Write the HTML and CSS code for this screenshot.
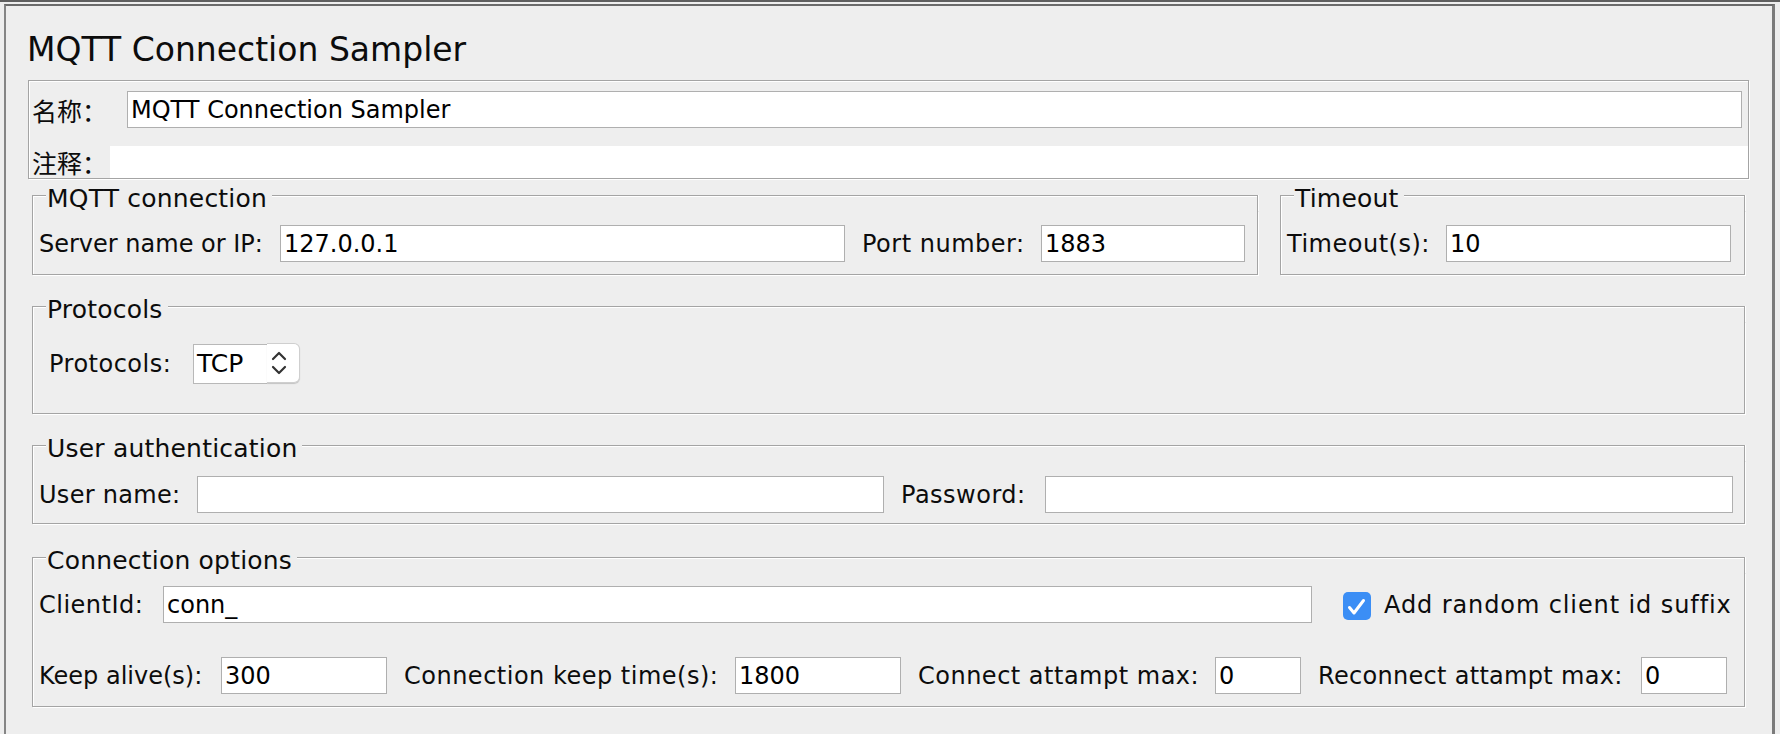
FILE: index.html
```html
<!DOCTYPE html>
<html lang="zh">
<head>
<meta charset="utf-8">
<title>MQTT Connection Sampler</title>
<link rel="stylesheet" href="styles.css">
</head>
<body>
<div class="window">
  <div class="panel">
    <h1 class="title">MQTT Connection Sampler</h1>

    <div class="namebox">
      <div class="name-row">
        <label class="cjk-lbl lbl-name">名称：</label>
        <input class="field name-field" type="text" value="MQTT Connection Sampler">
      </div>
      <div class="comment-row">
        <label class="cjk-lbl lbl-comment">注释：</label>
        <input class="comment-field" type="text" value="">
      </div>
    </div>

    <div class="content">
      <div class="group-row first">
        <section class="group g-mqtt">
          <div class="group-head"><span class="group-title">MQTT connection</span></div>
          <div class="group-body body-mqtt">
            <div class="row">
              <label class="lbl w-server">Server name or IP:</label>
              <input class="field w-server-f" type="text" value="127.0.0.1">
              <label class="lbl gap w-port">Port number:</label>
              <input class="field w-port-f" type="text" value="1883">
            </div>
          </div>
        </section>
        <section class="group g-timeout">
          <div class="group-head"><span class="group-title">Timeout</span></div>
          <div class="group-body body-mqtt">
            <div class="row">
              <label class="lbl w-timeout">Timeout(s):</label>
              <input class="field w-timeout-f" type="text" value="10">
            </div>
          </div>
        </section>
      </div>

      <section class="group g-proto">
        <div class="group-head"><span class="group-title">Protocols</span></div>
        <div class="group-body body-proto">
          <div class="row proto-row">
            <label class="lbl w-proto">Protocols:</label>
            <div class="spinner">
              <span class="spinner-text">TCP</span>
              <span class="spinner-btn">
                <svg width="16" height="26" viewBox="0 0 16 26" aria-hidden="true">
                  <path d="M2 9 L8 3 L14 9" fill="none" stroke="#333" stroke-width="2.2" stroke-linecap="round" stroke-linejoin="round"/>
                  <path d="M2 17 L8 23 L14 17" fill="none" stroke="#333" stroke-width="2.2" stroke-linecap="round" stroke-linejoin="round"/>
                </svg>
              </span>
            </div>
          </div>
        </div>
      </section>

      <section class="group g-user">
        <div class="group-head"><span class="group-title">User authentication</span></div>
        <div class="group-body body-user">
          <div class="row">
            <label class="lbl w-user">User name:</label>
            <input class="field w-user-f" type="text" value="">
            <label class="lbl gap w-pass">Password:</label>
            <input class="field w-pass-f" type="text" value="">
          </div>
        </div>
      </section>

      <section class="group g-conn">
        <div class="group-head"><span class="group-title">Connection options</span></div>
        <div class="group-body body-conn">
          <div class="row">
            <label class="lbl w-client">ClientId:</label>
            <input class="field w-client-f" type="text" value="conn_">
            <span class="check">
              <svg width="28" height="28" viewBox="0 0 28 28" aria-hidden="true">
                <path d="M6.5 15.5 L11 21 L20.5 8.5" fill="none" stroke="#fff" stroke-width="3" stroke-linecap="round" stroke-linejoin="round"/>
              </svg>
            </span>
            <label class="lbl check-lbl">Add random client id suffix</label>
          </div>
          <div class="row row2">
            <label class="lbl w-keep">Keep alive(s):</label>
            <input class="field w-keep-f" type="text" value="300">
            <label class="lbl gap w-ckeep">Connection keep time(s):</label>
            <input class="field w-ckeep-f" type="text" value="1800">
            <label class="lbl gap w-catt">Connect attampt max:</label>
            <input class="field w-small-f" type="text" value="0">
            <label class="lbl gap w-ratt">Reconnect attampt max:</label>
            <input class="field w-small-f" type="text" value="0">
          </div>
        </div>
      </section>
    </div>
  </div>
</div>
</body>
</html>
```

FILE: styles.css
```css
:root {
  --line: #a4a4a4;
  --field-border: #afafaf;
}

* { box-sizing: border-box; }

html, body {
  margin: 0;
  padding: 0;
}

body {
  width: 1780px;
  height: 734px;
  overflow: hidden;
  background: #eeeeee;
  color: #0c0c0c;
  font-family: "DejaVu Sans", "Noto Sans CJK SC", sans-serif;
  font-size: 24px;
}

.window {
  height: 734px;
  border-top: 2px solid #5f5f5f;
  padding-top: 2px;
}

.panel {
  margin-left: 4px;
  width: 1771px;
  height: 730px;
  border-top: 2px solid #6b6b6b;
  border-left: 2px solid #858585;
  border-right: 3px solid #7b7b7b;
  background: #eeeeee;
}

.title {
  margin: 0;
  padding: 24px 0 0 21px;
  font-weight: normal;
  font-size: 33px;
  line-height: 40px;
  color: #0c0c0c;
}

/* name / comment */
.namebox {
  margin: 10px 0 0 22px;
  width: 1721px;
  height: 99px;
  border: 1px solid var(--line);
  box-shadow: inset 1px 1px 0 #fff, 1px 1px 0 #fff;
  padding-top: 10px;
}

.name-row,
.comment-row {
  display: flex;
  align-items: center;
}

.comment-row {
  margin-top: 18px;
  height: 32px;
}

.cjk-lbl {
  flex: none;
  white-space: nowrap;
  padding-left: 3px;
  font-family: "Noto Sans CJK SC", sans-serif;
  font-size: 25px;
  line-height: 30px;
}

.lbl-name { width: 98px; }
.lbl-comment { width: 81px; }

.lbl {
  flex: none;
  white-space: nowrap;
  line-height: 28px;
  letter-spacing: 0.5px;
}

.field {
  flex: none;
  height: 37px;
  margin: 0;
  padding: 0 3px;
  border: 1px solid var(--field-border);
  background: #fff;
  font: inherit;
  font-size: 24px;
  color: #000;
  outline: none;
}

.name-field { width: 1615px; }

.comment-field {
  flex: 1;
  height: 32px;
  margin: 0;
  border: 0;
  background: #fff;
  font: inherit;
  outline: none;
}

/* groups */
.content {
  padding: 0 27px 0 26px;
}

.group-row {
  display: flex;
  gap: 22px;
}

.first { margin-top: 8px; }

.group {
  display: flex;
  flex-direction: column;
}

.g-mqtt { width: 1226px; }
.g-timeout { flex: 1; }
.g-proto { margin-top: 23px; }
.g-user { margin-top: 23px; }
.g-conn { margin-top: 25px; }

.group-head {
  display: flex;
  height: 24px;
}

.group-head::before {
  content: "";
  flex: none;
  width: 13px;
  margin-top: 8px;
  border-top: 1px solid var(--line);
  border-left: 1px solid var(--line);
  box-shadow: inset 1px 1px 0 #fff;
}

.group-head::after {
  content: "";
  flex: 1;
  margin-top: 8px;
  border-top: 1px solid var(--line);
  border-right: 1px solid var(--line);
  box-shadow: inset 0 1px 0 #fff, 1px 0 0 #fff;
}

.group-title {
  flex: none;
  padding: 0 5px 0 1px;
  white-space: nowrap;
  font-size: 25px;
  line-height: 24px;
  letter-spacing: 0.2px;
  color: #0c0c0c;
}

.group-body {
  border: 1px solid var(--line);
  border-top: 0;
  box-shadow: inset 1px 0 0 #fff, 1px 1px 0 #fff;
  padding-left: 6px;
}

.body-mqtt { padding-top: 14px; padding-bottom: 12px; }
.body-proto { padding-top: 22px; padding-bottom: 29px; }
.body-user { padding-top: 15px; padding-bottom: 10px; }
.body-conn { padding-top: 13px; padding-bottom: 12px; }

.row {
  display: flex;
  align-items: center;
}

.row2 { margin-top: 34px; }

.gap { padding-left: 17px; }

.w-server { width: 241px; letter-spacing: 0; }
.w-server-f { width: 565px; }
.w-port { width: 196px; }
.w-port-f { width: 204px; }

.w-timeout { width: 159px; }
.w-timeout-f { width: 285px; }

.proto-row { padding-left: 10px; }
.w-proto { width: 144px; }

.spinner {
  display: flex;
  height: 40px;
  width: 107px;
}

.spinner-text {
  width: 74px;
  height: 40px;
  padding-left: 3px;
  background: #fff;
  border: 1px solid #b8b8b8;
  border-right: 0;
  line-height: 38px;
  font-size: 25px;
  color: #000;
}

.spinner-btn {
  flex: 1;
  height: 40px;
  margin-top: -1px;
  display: flex;
  align-items: center;
  justify-content: center;
  padding-right: 8px;
  background: #fff;
  border: 1px solid #cfcfcf;
  border-left: 0;
  border-radius: 0 6px 6px 0;
  box-shadow: 0 1px 1px rgba(0, 0, 0, 0.18);
}

.w-user { width: 158px; letter-spacing: 0.3px; }
.w-user-f { width: 687px; }
.w-pass { width: 161px; }
.w-pass-f { width: 688px; }

.w-client { width: 124px; }
.w-client-f { width: 1149px; }

.check {
  flex: none;
  width: 28px;
  height: 28px;
  margin-left: 31px;
  margin-top: 3px;
  border-radius: 5px;
  background: #3b8ef5;
  display: flex;
}

.check-lbl { padding-left: 13px; letter-spacing: 0.9px; }

.w-keep { width: 182px; letter-spacing: 0; }
.w-keep-f { width: 166px; }
.w-ckeep { width: 348px; }
.w-ckeep-f { width: 166px; }
.w-catt { width: 314px; }
.w-small-f { width: 86px; }
.w-ratt { width: 340px; letter-spacing: 0.3px; }
```
